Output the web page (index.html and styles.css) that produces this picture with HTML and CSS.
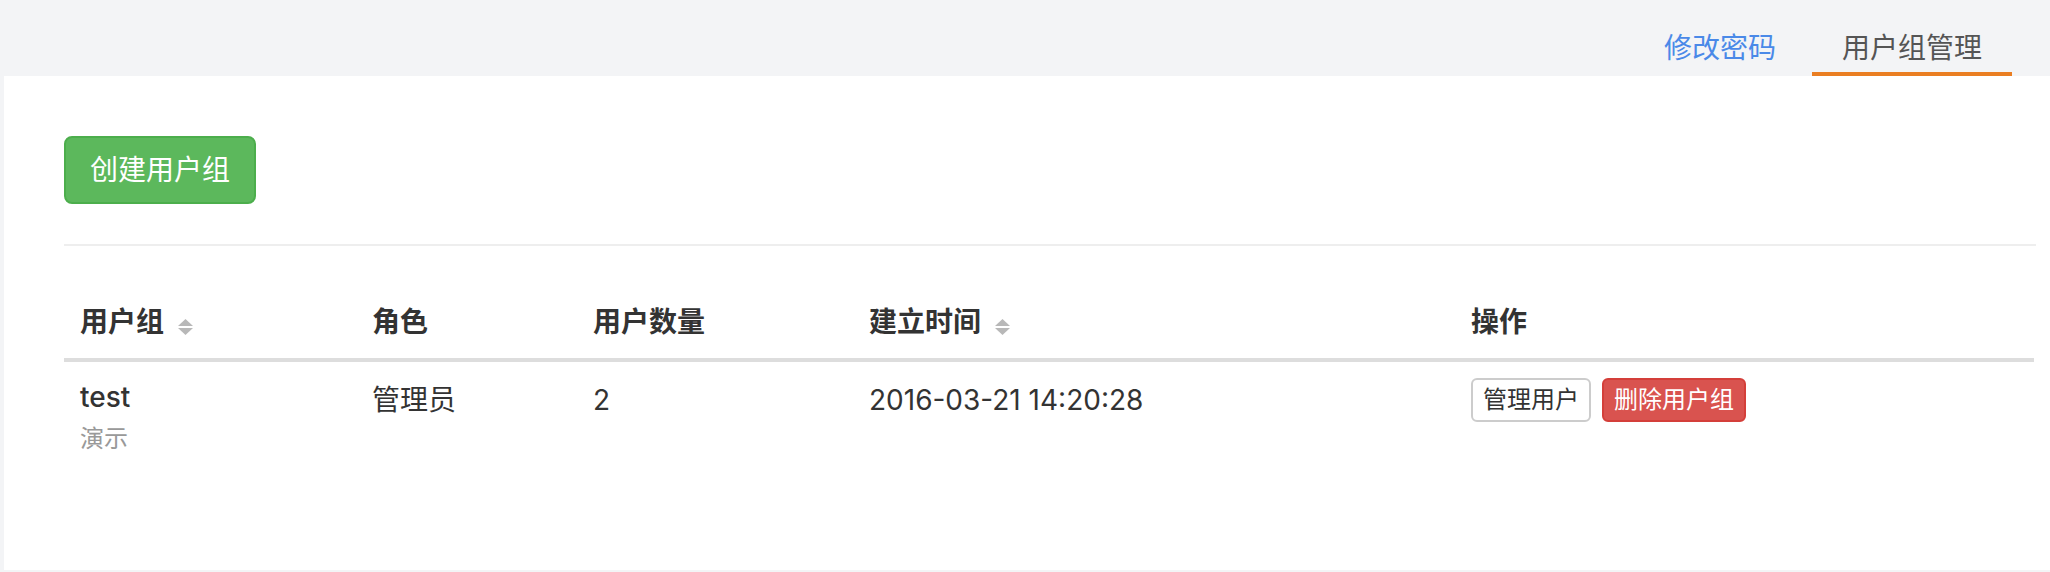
FILE: index.html
```html
<!DOCTYPE html>
<html lang="zh-CN">
<head>
<meta charset="utf-8">
<title>用户组管理</title>
<link rel="stylesheet" href="styles.css">
</head>
<body>
<div class="topbar">
  <ul class="tabs">
    <li class="tab"><a class="tab-link">修改密码</a></li>
    <li class="tab active"><a class="tab-link">用户组管理</a></li>
  </ul>
</div>
<div class="panel">
  <button class="btn btn-success">创建用户组</button>
  <hr class="divider">
  <table class="table">
    <colgroup>
      <col class="c1"><col class="c2"><col class="c3"><col class="c4"><col class="c5">
    </colgroup>
    <thead>
      <tr>
        <th>用户组<svg class="sort" viewBox="0 0 15 16" width="15" height="16"><polygon points="0,7 7.5,0 15,7" /><polygon points="0,9 15,9 7.5,16" /></svg></th>
        <th>角色</th>
        <th>用户数量</th>
        <th>建立时间<svg class="sort" viewBox="0 0 15 16" width="15" height="16"><polygon points="0,7 7.5,0 15,7" /><polygon points="0,9 15,9 7.5,16" /></svg></th>
        <th>操作</th>
      </tr>
    </thead>
    <tbody>
      <tr>
        <td><div class="name">test</div><div class="desc">演示</div></td>
        <td class="txt">管理员</td>
        <td class="txt">2</td>
        <td class="txt">2016-03-21 14:20:28</td>
        <td><div class="ops"><button class="btn-xs btn-default">管理用户</button><button class="btn-xs btn-danger">删除用户组</button></div></td>
      </tr>
    </tbody>
  </table>
</div>
</body>
</html>
```

FILE: styles.css
```css
* { box-sizing: border-box; }
html, body { margin: 0; padding: 0; }
body {
  background: #f3f4f6;
  font-family: "Inter", "Noto Sans CJK SC", sans-serif;
  font-size: 28px;
  line-height: 40px;
  color: #333;
  overflow: hidden;
}
.topbar {
  height: 76px;
  display: flex;
  justify-content: flex-end;
  padding-right: 38px;
}
.tabs {
  list-style: none;
  margin: 0;
  padding: 0;
  display: flex;
  align-items: flex-end;
  gap: 6px;
}
.tab-link {
  display: block;
  padding: 28px 30px 4px;
  border-bottom: 4px solid transparent;
  color: #4a89e8;
  line-height: 40px;
  cursor: pointer;
}
.tab.active .tab-link {
  color: #555;
  border-bottom-color: #ea7e22;
}
.panel {
  background: #fff;
  margin-left: 4px;
  height: 494px;
  padding: 60px 14px 0 60px;
}
.btn {
  font-family: inherit;
  font-size: 28px;
  line-height: 40px;
  padding: 12px 24px;
  border-radius: 8px;
  border: 2px solid transparent;
  display: block;
  cursor: pointer;
}
.btn-success {
  background: #5cb85c;
  border-color: #4cae4c;
  color: #fff;
}
.divider {
  border: 0;
  border-top: 2px solid #eee;
  margin: 40px 0;
  height: 0;
}
.table {
  width: calc(100% - 2px);
  border-collapse: collapse;
  border-spacing: 0;
}
.c1 { width: 292px; }
.c2 { width: 221px; }
.c3 { width: 276px; }
.c4 { width: 602px; }
.table th {
  text-align: left;
  font-weight: bold;
  padding: 16px;
  line-height: 40px;
  border-bottom: 4px solid #ddd;
  vertical-align: bottom;
  color: #333;
}
.table td {
  padding: 16px;
  line-height: 40px;
  vertical-align: top;
  color: #333;
}
.table td.txt {
  padding-top: 18px;
}
.sort {
  fill: #b8b8b8;
  margin-left: 14px;
  vertical-align: -3px;
}
.name {
  font-weight: 500;
  line-height: 38px;
}
.desc {
  font-size: 24px;
  line-height: 38px;
  margin-top: 4px;
  color: #999;
}
.ops {
  display: flex;
  gap: 11px;
  align-items: flex-start;
}
.btn-xs {
  font-family: inherit;
  font-size: 24px;
  line-height: 36px;
  padding: 2px 10px;
  border-radius: 6px;
  border: 2px solid transparent;
  cursor: pointer;
}
.btn-default {
  background: #fff;
  border-color: #ccc;
  color: #333;
}
.btn-danger {
  background: #d9534f;
  border-color: #d43f3a;
  color: #fff;
}
```
